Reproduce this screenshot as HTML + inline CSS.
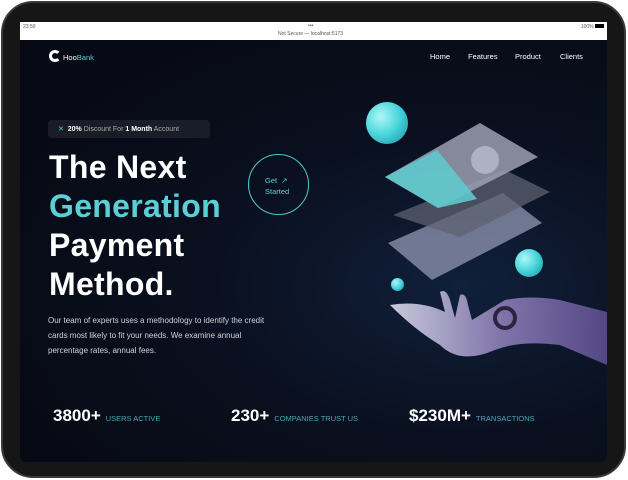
<!DOCTYPE html>
<html><head><style>
*{margin:0;padding:0;box-sizing:border-box}
body{width:628px;height:480px;background:#fff;font-family:"Liberation Sans",sans-serif;position:relative;overflow:hidden}
.dev{position:absolute;left:1px;top:1px;width:625px;height:477px;background:#161616;border-radius:32px;border:2px solid #3a3a3a}
.scr{position:absolute;left:20px;top:22px;width:587px;height:440px;background:radial-gradient(ellipse at 75% 60%,#10203a 0%,#0a1020 40%,#070a14 80%);border-radius:0 0 6px 6px;overflow:hidden}
.sb{position:absolute;left:0;top:0;width:587px;height:18px;background:#fff;font-size:5px;color:#555}
.abs{position:absolute}
.nav{color:#fff;font-size:7.5px}
h1{position:absolute;left:29px;top:126px;color:#fff;font-size:32px;line-height:39px;font-weight:bold;letter-spacing:0.3px}
.c{color:#5ccfd6}
.st{position:absolute;top:384px;color:#fff;font-size:17px;font-weight:bold}
.st span{font-size:7.5px;font-weight:normal;color:#4aa7b3;margin-left:5px}
.ball{position:absolute;border-radius:50%;background:radial-gradient(circle at 35% 35%,#aef7f8,#45d3d9 50%,#1a8b99)}
</style></head><body>
<div class="dev"></div>
<div class="scr">
 <div class="sb"><span class="abs" style="left:3px;top:2px">23:59</span><span class="abs" style="left:288px;top:1px">•••</span><span class="abs" style="left:258px;top:9px">Not Secure — localhost:5173</span><span class="abs" style="right:3px;top:2px">100% <b style="display:inline-block;width:9px;height:4px;background:#000"></b></span></div>
 <div class="abs" style="left:29px;top:28px;width:12px;height:12px;border-radius:50%;border:3px solid #fff;border-right-color:transparent"></div>
 <div class="abs nav" style="left:43px;top:31px">Hoo<span class="c">Bank</span></div>
 <div class="abs nav" style="left:410px;top:30px">Home</div>
 <div class="abs nav" style="left:448px;top:30px">Features</div>
 <div class="abs nav" style="left:495px;top:30px">Product</div>
 <div class="abs nav" style="left:540px;top:30px">Clients</div>
 <div class="abs" style="left:28px;top:98px;width:162px;height:18px;background:#1a1d27;border-radius:4px;font-size:7px;color:#aaa;padding:5px 0 0 10px"><span class="c">✕</span>&nbsp; <b style="color:#fff">20%</b> Discount For <b style="color:#fff">1 Month</b> Account</div>
 <h1>The Next<br><span class="c">Generation</span><br>Payment<br>Method.</h1>
 <div class="abs" style="left:228px;top:132px;width:61px;height:61px;border-radius:50%;border:1px solid #4fc6cf;color:#5ccfd6;font-size:7.5px;padding:20px 0 0 16px;line-height:11px">Get &nbsp;↗<br>Started</div>
 <div class="abs" style="left:28px;top:291px;color:#cfd3da;font-size:8px;line-height:15px;width:218px">Our team of experts uses a methodology to identify the credit cards most likely to fit your needs. We examine annual percentage rates, annual fees.</div>
 <svg class="abs" style="left:0;top:0" width="587" height="440" viewBox="20 22 587 440">
  <defs><linearGradient id="arm" x1="0" x2="1"><stop offset="0" stop-color="#dcdcee"/><stop offset=".5" stop-color="#8d80b8"/><stop offset="1" stop-color="#5b4d8e"/></linearGradient></defs>
  <polygon points="388,243 503,193 542,223 432,280" fill="#9aa0bc" opacity=".7"/>
  <polygon points="393,215 505,170 550,192 460,237" fill="#5e6170" opacity=".75"/>
  <polygon points="385,177 480,123 538,157 438,208" fill="#9c9fb2" opacity=".85"/>
  <polygon points="385,177 437,150 477,199 438,208" fill="#5fc9cc" opacity=".9"/>
  <circle cx="485" cy="160" r="14" fill="#b8bccb" opacity=".8"/>
  <path d="M390,305 Q420,300 445,312 L440,292 Q446,288 450,300 L455,318 L460,295 Q466,292 468,305 L472,320 L505,300 Q530,295 560,300 L607,312 L607,365 L560,345 Q520,340 495,350 Q460,365 440,345 Q415,330 390,305 Z" fill="url(#arm)" opacity=".9"/>
  <circle cx="505" cy="318" r="10" fill="none" stroke="#2a2440" stroke-width="4"/>
 </svg>
 <div class="ball" style="left:346px;top:80px;width:42px;height:42px"></div>
 <div class="ball" style="left:495px;top:227px;width:28px;height:28px"></div>
 <div class="ball" style="left:371px;top:256px;width:13px;height:13px"></div>
 <div class="st" style="left:33px">3800+<span>USERS ACTIVE</span></div>
 <div class="st" style="left:211px">230+<span>COMPANIES TRUST US</span></div>
 <div class="st" style="left:389px">$230M+<span>TRANSACTIONS</span></div>
</div>
</body></html>
